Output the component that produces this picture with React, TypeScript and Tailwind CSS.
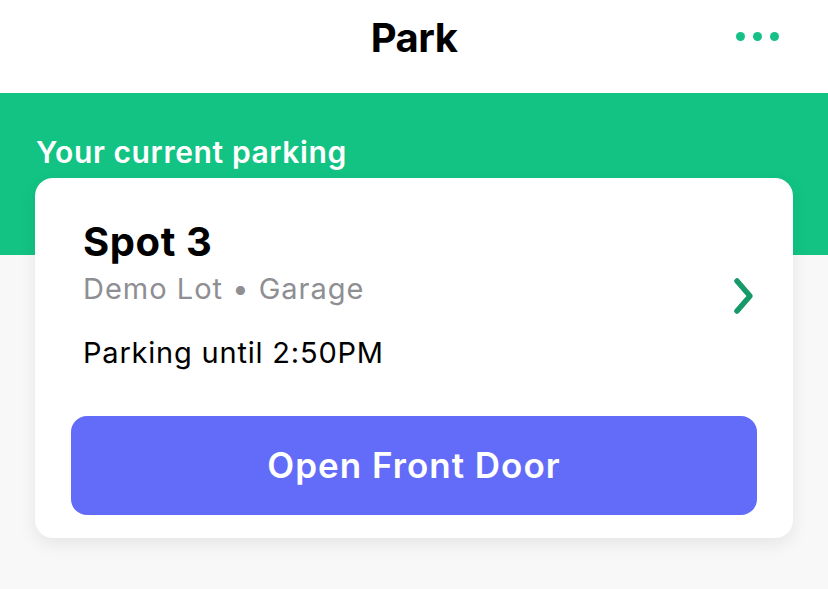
import React from 'react';

const font = { fontFamily: 'Inter, "Noto Sans", sans-serif' };

const App: React.FC = () => {
  return (
    <div className="w-[828px] h-[589px] bg-[#f8f8f8] overflow-hidden" style={font}>
      <header className="h-[93px] bg-white flex items-center justify-center relative">
        <h1 className="text-[40px] font-bold text-black leading-none -mt-[18px] tracking-[-0.5px]">Park</h1>
        <div className="absolute right-[49px] top-[32px] flex gap-[8px]">
          <span className="w-[9px] h-[9px] rounded-full bg-[#17c088]" />
          <span className="w-[9px] h-[9px] rounded-full bg-[#17c088]" />
          <span className="w-[9px] h-[9px] rounded-full bg-[#17c088]" />
        </div>
      </header>

      <section className="relative">
        <div className="h-[162px] bg-[#12c384]" />
        <div className="absolute inset-x-0 top-0 px-[35px]">
          <p className="text-white text-[30px] font-semibold leading-none pt-[44px] pl-[1px] tracking-[0.6px]">Your current parking</p>
          <div className="mt-[11px] bg-white rounded-[18px] shadow-[0_6px_18px_rgba(0,0,0,0.08)] px-[36px] pt-[44px] pb-[23px]">
            <div className="flex items-center justify-between pl-[12px] pr-[1px]">
              <div>
                <h2 className="text-[40px] font-bold text-black leading-none tracking-[0.6px]">Spot 3</h2>
                <p className="text-[29px] text-[#8e8e93] leading-none mt-[12px] tracking-[1px]">Demo Lot • Garage</p>
                <p className="text-[29px] text-black leading-none mt-[35px] tracking-[0.8px]">Parking until 2:50PM</p>
              </div>
              <svg width="24" height="38" viewBox="0 0 24 38" className="mt-[2px]">
                <path d="M5 4 L18 19 L5 34" fill="none" stroke="#179a6a" strokeWidth="5.5" strokeLinecap="round" strokeLinejoin="round" />
              </svg>
            </div>
            <button className="mt-[49px] w-full h-[99px] rounded-[16px] bg-[#636cf8] text-white text-[35px] font-semibold tracking-[1px]">
              Open Front Door
            </button>
          </div>
        </div>
      </section>
    </div>
  );
};

export default App;
